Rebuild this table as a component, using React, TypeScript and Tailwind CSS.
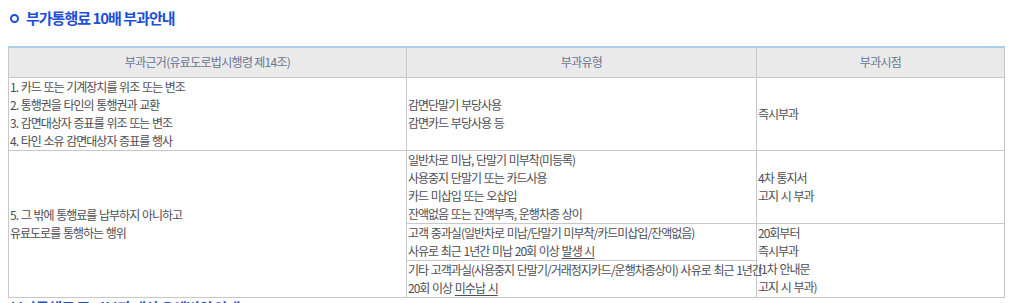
export default function App() {
  const cell = "border border-[#c8c8c8] px-px align-middle text-left tracking-[-1px] [word-spacing:1px]";
  return (
    <div className="bg-white w-[1010px] h-[303px] overflow-hidden font-['Noto_Sans_CJK_KR',sans-serif] text-[12px] leading-[18px] text-[#4d4d55]">
      <h2 className="flex items-start gap-[7px] pl-[10px] pt-[9px] h-[46px] text-[15px] leading-[18px] font-bold text-[#1d4fd8] tracking-[-1px]">
        <span className="mt-[5px] w-[9px] h-[9px] rounded-full border-2 border-[#1d4fd8]"></span>
        부가통행료 10배 부과안내
      </h2>
      <table className="ml-2 w-[997px] border-collapse border-t-2 border-t-[#a8d0e8] table-fixed">
        <colgroup>
          <col className="w-[398px]" />
          <col className="w-[350px]" />
          <col />
        </colgroup>
        <thead>
          <tr className="bg-[#eaeaea] text-[#6b7592] h-[30px] tracking-[-0.7px]">
            <th className="border border-[#c8c8c8] border-t-0 font-normal text-center">부과근거(유료도로법시행령 제14조)</th>
            <th className="border border-[#c8c8c8] border-t-0 font-normal text-center">부과유형</th>
            <th className="border border-[#c8c8c8] border-t-0 font-normal text-center">부과시점</th>
          </tr>
        </thead>
        <tbody>
          <tr className="h-[73px]">
            <td className={cell}>
              1. 카드 또는 기계장치를 위조 또는 변조<br />
              2. 통행권을 타인의 통행권과 교환<br />
              3. 감면대상자 증표를 위조 또는 변조<br />
              4. 타인 소유 감면대상자 증표를 행사
            </td>
            <td className={cell}>
              감면단말기 부당사용<br />
              감면카드 부당사용 등
            </td>
            <td className={cell}>즉시부과</td>
          </tr>
          <tr className="h-[73px]">
            <td className={cell} rowSpan={3}>
              5. 그 밖에 통행료를 납부하지 아니하고<br />
              유료도로를 통행하는 행위
            </td>
            <td className={cell}>
              일반차로 미납, 단말기 미부착(미등록)<br />
              사용중지 단말기 또는 카드사용<br />
              카드 미삽입 또는 오삽입<br />
              잔액없음 또는 잔액부족, 운행차종 상이
            </td>
            <td className={cell}>
              4차 통지서<br />
              고지 시 부과
            </td>
          </tr>
          <tr className="h-[37px]">
            <td className={cell}>
              고객 중과실(일반차로 미납/단말기 미부착/카드미삽입/잔액없음)<br />
              사유로 최근 1년간 미납 20회 이상 <span className="underline underline-offset-2">발생 시</span>
            </td>
            <td className={cell} rowSpan={2}>
              20회부터<br />
              즉시부과<br />
              (1차 안내문<br />
              고지 시 부과)
            </td>
          </tr>
          <tr className="h-[37px]">
            <td className={`${cell} whitespace-nowrap`}>
              기타 고객과실(사용중지 단말기/거래정지카드/운행차종상이) 사유로 최근 1년간<br />
              20회 이상 <span className="underline underline-offset-2">미수납 시</span>
            </td>
          </tr>
        </tbody>
      </table>
      <p className="pl-[10px] pt-[1px] text-[15px] leading-[18px] font-bold text-[#1d4fd8] tracking-[-1px]">
        부가통행료 중 시부과 대상 유예범위 안내
      </p>
    </div>
  );
}
